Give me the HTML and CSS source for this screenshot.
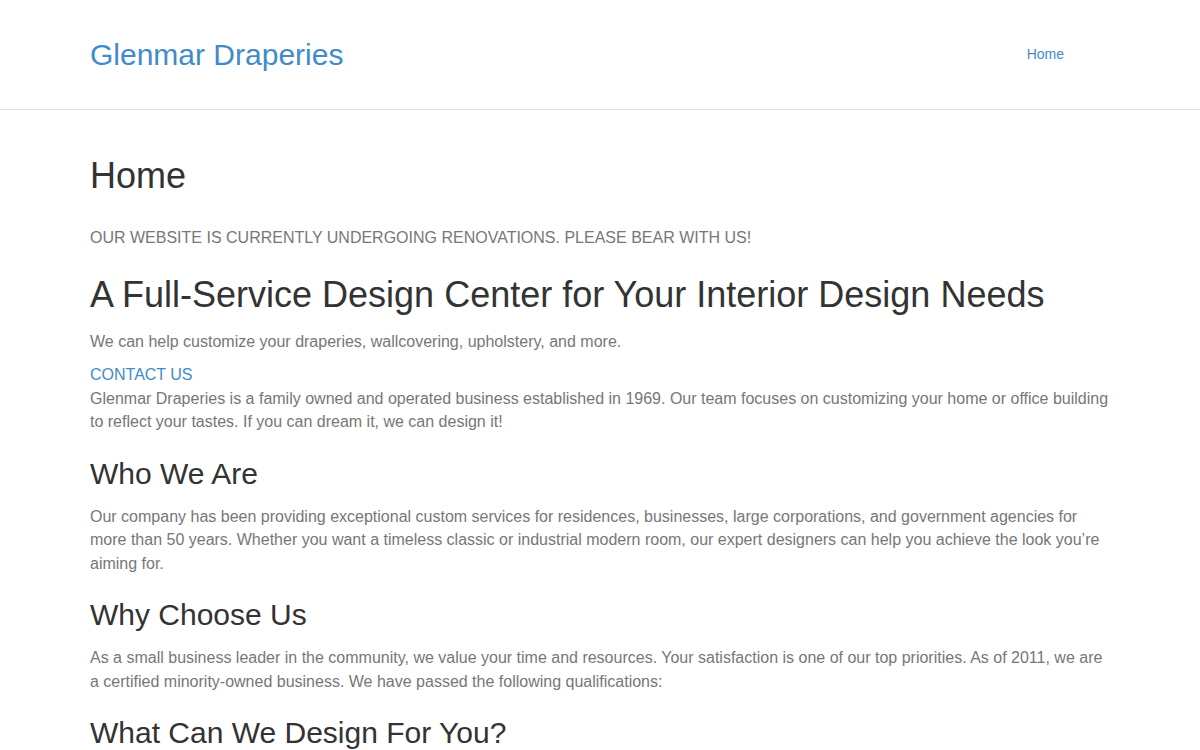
FILE: index.html
```html
<!DOCTYPE html>
<html lang="en">
<head>
<meta charset="utf-8">
<title>Glenmar Draperies</title>
<link rel="stylesheet" href="styles.css">
</head>
<body>
<header class="site-header">
  <div class="container header-inner">
    <a class="brand" href="#">Glenmar Draperies</a>
    <nav class="nav"><a href="#" class="nav-link">Home</a></nav>
  </div>
</header>
<main class="container content">
  <h1 class="page-title">Home</h1>
  <p class="notice">OUR WEBSITE IS CURRENTLY UNDERGOING RENOVATIONS. PLEASE BEAR WITH US!</p>
  <h2 class="hero-title">A Full-Service Design Center for Your Interior Design Needs</h2>
  <p class="text lead-in">We can help customize your draperies, wallcovering, upholstery, and more.</p>
  <a href="#" class="contact">CONTACT US</a>
  <p class="text">Glenmar Draperies is a family owned and operated business established in 1969. Our team focuses on customizing your home or office building to reflect your tastes. If you can dream it, we can design it!</p>
  <h3 class="section-title">Who We Are</h3>
  <p class="text">Our company has been providing exceptional custom services for residences, businesses, large corporations, and government agencies for more than 50 years. Whether you want a timeless classic or industrial modern room, our expert designers can help you achieve the look you’re aiming for.</p>
  <h3 class="section-title">Why Choose Us</h3>
  <p class="text">As a small business leader in the community, we value your time and resources. Your satisfaction is one of our top priorities. As of 2011, we are a certified minority-owned business. We have passed the following qualifications:</p>
  <h3 class="section-title">What Can We Design For You?</h3>
</main>
</body>
</html>
```
FILE: styles.css
```css
html, body {
  margin: 0;
  padding: 0;
  background: #fff;
}
body {
  font-family: "Liberation Sans", Arial, Helvetica, sans-serif;
  color: #777;
  font-size: 16px;
  line-height: 23.5px;
}
.container {
  width: 1020px;
  margin: 0 auto;
}
.site-header {
  border-bottom: 1px solid #e0e0e0;
  height: 109px;
}
.header-inner {
  display: flex;
  align-items: center;
  justify-content: space-between;
  height: 109px;
}
.brand {
  color: #428bca;
  text-decoration: none;
  font-size: 30px;
  line-height: 34px;
}
.nav {
  padding-right: 46px;
}
.nav-link {
  color: #428bca;
  text-decoration: none;
  font-size: 14px;
}
.content {
  padding-top: 46px;
}
.page-title {
  margin: 0 0 30px;
  font-weight: normal;
  font-size: 36px;
  line-height: 40px;
  color: #333;
}
.notice {
  margin: 0 0 25px;
}
.hero-title {
  margin: 0 0 15px;
  font-weight: normal;
  font-size: 36px;
  line-height: 40px;
  color: #333;
}
.text {
  margin: 0 0 23px;
}
.text.lead-in {
  margin-bottom: 10px;
}
.contact {
  display: block;
  color: #428bca;
  text-decoration: none;
}
.section-title {
  margin: 0 0 14px;
  font-weight: normal;
  font-size: 30px;
  line-height: 34px;
  color: #333;
}
```
